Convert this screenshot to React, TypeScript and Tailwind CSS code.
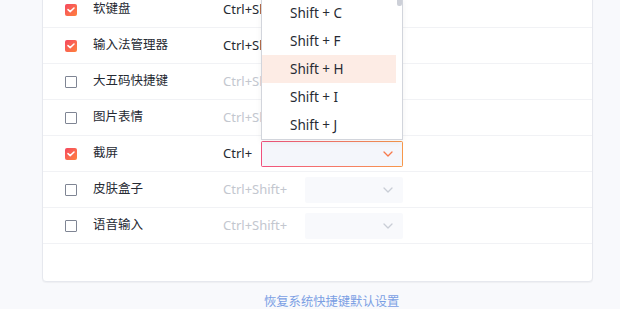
import React from "react";

type Row = { label: string; checked: boolean; prefix: string; open?: boolean };

const rows: Row[] = [
  { label: "软键盘", checked: true, prefix: "Ctrl+Shift+" },
  { label: "输入法管理器", checked: true, prefix: "Ctrl+Shift+" },
  { label: "大五码快捷键", checked: false, prefix: "Ctrl+Shift+" },
  { label: "图片表情", checked: false, prefix: "Ctrl+Shift+" },
  { label: "截屏", checked: true, prefix: "Ctrl+", open: true },
  { label: "皮肤盒子", checked: false, prefix: "Ctrl+Shift+" },
  { label: "语音输入", checked: false, prefix: "Ctrl+Shift+" },
];

function Chevron({ color }: { color: string }) {
  return (
    <svg width="10" height="6" viewBox="0 0 10 6" fill="none">
      <path d="M1 1l4 4 4-4" stroke={color} strokeWidth="1.3" strokeLinecap="round" strokeLinejoin="round" />
    </svg>
  );
}

function Checkbox({ checked }: { checked: boolean }) {
  if (checked) {
    return (
      <div className="w-[12px] h-[12px] rounded-[2px] bg-gradient-to-br from-[#f4465f] to-[#ff8039] flex items-center justify-center shrink-0">
        <svg width="8" height="6" viewBox="0 0 8 6" fill="none">
          <path d="M1 2.6l2.2 2 3.8-3.6" stroke="#fff" strokeWidth="1.5" strokeLinecap="round" strokeLinejoin="round" />
        </svg>
      </div>
    );
  }
  return <div className="w-[12px] h-[12px] rounded-[1px] border-[1.5px] border-[#7f8594] bg-white shrink-0" />;
}

export default function App() {
  return (
    <div
      className="relative w-[620px] h-[309px] overflow-hidden bg-[#f8f9fc]"
      style={{ fontFamily: '"Noto Sans", "Noto Sans CJK SC", sans-serif' }}
    >
      <div className="ml-[42px] mt-[-9px] w-[551px] bg-white border border-[#e6e8ee] rounded-[4px] shadow-[0_1px_1px_rgba(0,0,0,0.04)]">
        {rows.map((r) => (
          <div key={r.label} className="h-[36px] border-b border-[#f1f2f5] flex items-center pl-[22px]">
            <Checkbox checked={r.checked} />
            <div className="ml-[16px] w-[130px] text-[12.5px] text-[#262a33] leading-none">{r.label}</div>
            <div className="w-[180px] flex items-center justify-between">
              <span className={`text-[13px] leading-none ${r.checked ? "text-[#262a33]" : "text-[#c3c7cf]"}`}>{r.prefix}</span>
              {r.open ? (
                <div className="w-[142px] h-[26px] p-px rounded-[2px] bg-gradient-to-r from-[#f0507d] to-[#f7984a]">
                  <div className="w-full h-full bg-[#f4f6fb] flex items-center justify-end pr-[9px]">
                    <Chevron color="#f7794a" />
                  </div>
                </div>
              ) : (
                <div className="w-[98px] h-[26px] bg-[#f8f9fc] rounded-[2px] flex items-center justify-end pr-[10px]">
                  <Chevron color="#c9cdd6" />
                </div>
              )}
            </div>
          </div>
        ))}
        <div className="h-[37px]" />
      </div>
      <div className="mt-[14px] pl-[264px] text-[12.3px] text-[#7b9fe4] leading-none">恢复系统快捷键默认设置</div>

      <div className="absolute left-[261px] top-[-2px] w-[142px] h-[142px] bg-white border border-[#d2d5dc] shadow-[0_2px_6px_rgba(0,0,0,0.06)] flex">
        <div className="flex-1 flex flex-col">
          {["Shift + C", "Shift + F", "Shift + H", "Shift + I", "Shift + J"].map((t) => (
            <div
              key={t}
              className={`h-[28px] flex items-center pl-[28px] text-[13.5px] text-[#262a33] ${t === "Shift + H" ? "bg-[#fdece5]" : ""}`}
            >
              {t}
            </div>
          ))}
        </div>
        <div className="w-[6px] pt-[1px] flex justify-center">
          <div className="w-[5px] h-[6px] rounded-b-[2px] bg-[#cdd0d8]" />
        </div>
      </div>
    </div>
  );
}
